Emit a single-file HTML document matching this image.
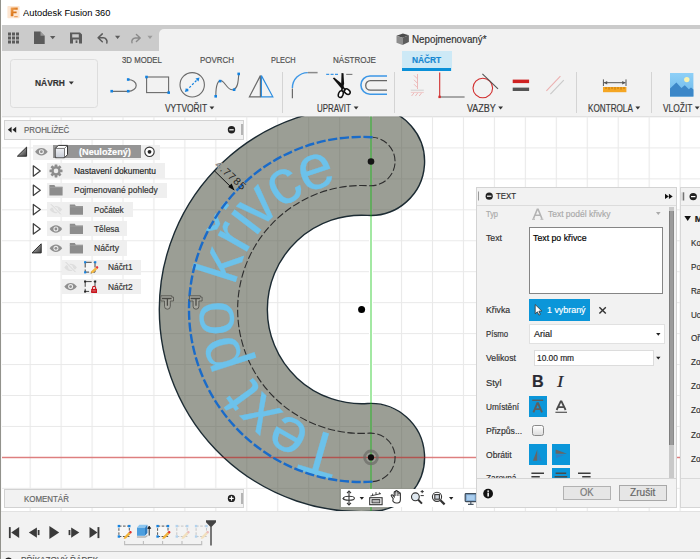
<!DOCTYPE html>
<html lang="cs">
<head>
<meta charset="utf-8">
<title>Autodesk Fusion 360</title>
<style>
*{box-sizing:border-box;margin:0;padding:0}
html,body{width:700px;height:559px;overflow:hidden;background:#fff}
body{position:relative;font-family:"Liberation Sans",sans-serif;font-size:9px;color:#444}
.abs{position:absolute}
svg{position:absolute;overflow:visible}
.t{position:absolute;white-space:nowrap;line-height:12px;height:12px;transform-origin:0 50%;-webkit-text-stroke:.18px currentColor}
#titlebar{left:0;top:0;width:700px;height:25px;background:#fff}
#qat{left:0;top:25px;width:700px;height:26px;background:#cbcbcb}
#qatlight{left:158.500px;top:28.500px;width:542px;height:22.500px;background:#f2f2f2;border-top-left-radius:5px}
#ribbon{left:0;top:51px;width:700px;height:65px;background:#f2f2f2}
#ribline{left:0;top:116px;width:700px;height:1px;background:#dedede}
#canvas{left:0;top:117px;width:700px;height:395px;background:#fff}
#timeline{left:0;top:511.400px;width:700px;height:40px;background:#f2f2f2;border-top:1px solid #e2e2e2}
#cmdbar{left:0;top:550.500px;width:700px;height:9px;background:#f2f2f2;border-top:1px solid #c6c6c6}
#leftedge{left:0;top:0;width:1px;height:559px;background:#92928c}
.sep{position:absolute;top:72px;width:1px;height:41px;background:#d4d4d4}
.rowbg{position:absolute;height:15px;background:#efefef}
.panelhdr{position:absolute;background:#f2f2f2;border:1px solid #d2d2d2}
</style>
</head>
<body>
<div id="titlebar" class="abs"></div>
<div id="qat" class="abs"></div>
<div id="qatlight" class="abs"></div>
<div id="ribbon" class="abs"></div>
<div id="ribline" class="abs"></div>
<div id="canvas" class="abs"></div>

<svg style="left:0;top:116px" width="700" height="396" viewBox="0 116 700 396">
  <defs>
    <pattern id="grid" x="355.125" y="441.925" width="30.950" height="30.950" patternUnits="userSpaceOnUse">
      <path d="M15.475 0V30.950M0 15.475H30.950" stroke="#e9e9e9" stroke-width="1.100" fill="none"/>
    </pattern>
    <path id="tp" d="M370.41 448.17 A139 139 0 1 1 370.41 170.73"/>
    <clipPath id="cv"><rect x="0" y="116.500" width="700" height="395.500"/></clipPath>
  </defs>
  <g clip-path="url(#cv)">
  <rect x="0" y="116" width="700" height="396" fill="url(#grid)"/>
  <rect x="369" y="116" width="4" height="396" fill="#fff"/>
  <!-- body -->
  <path d="M374.42 107.61 A202.25 202.25 0 1 0 374.42 511.29 A54 54 0 0 0 367.58 403.51 A94.25 94.25 0 1 1 367.58 215.39 A54 54 0 0 0 374.42 107.61 Z" fill="#464b3b" fill-opacity=".54" stroke="#1c2b33" stroke-width="1.4"/>
  <!-- axis lines -->
  <line x1="371" y1="116" x2="371" y2="512" stroke="#00be00" stroke-opacity=".36" stroke-width="2"/>
  <line x1="0" y1="457.4" x2="700" y2="457.4" stroke="#d01414" stroke-opacity=".5" stroke-width="1.500"/>
  <!-- slot dashed -->
  <path d="M372.54 481.65 A24.3 24.3 0 0 0 369.46 433.15 A123.95 123.95 0 1 1 369.46 185.75 A24.3 24.3 0 0 0 372.54 137.25" fill="none" stroke="#2e2e2e" stroke-width="1.100" stroke-dasharray="7.500 2.500"/>
  <!-- text on curve -->
  <text font-family="Liberation Sans, sans-serif" font-size="63" fill="#6cc2eb" stroke="#6cc2eb" stroke-width=".25" dy="10.700" style="font-kerning:none"><textPath href="#tp" startOffset="28.700">T<tspan dx="-2.700">e</tspan>xt po k<tspan dx="3">ř</tspan><tspan dx="1.200">i</tspan><tspan dx="-4.200">v</tspan>ce</textPath></text>
  <path d="M372.54 137.25 A172.55 172.55 0 1 0 372.54 481.65" fill="none" stroke="#1a6bc9" stroke-width="2.400" stroke-dasharray="9.200 2.600"/>
  <!-- dimension -->
  <line x1="214.300" y1="170.700" x2="234" y2="190" stroke="#111" stroke-width="1"/>
  <path d="M234.600 190.600l-6.400-3.700l3.400-3.300z" fill="#0a0a0a"/>
  <text font-family="Liberation Sans, sans-serif" font-size="10.600" letter-spacing=".9" fill="#262626" transform="translate(214.400,165.700) rotate(42)"><tspan fill="#e4e4e0" stroke="#777" stroke-width=".5">4</tspan>.7785</text>
  <!-- constraint glyphs -->
  <g id="cg" fill="none" stroke-linejoin="round">
    <path d="M160.800 295.800h11v1.300h1.700v3.900h-3.200v5.300a2.900 2.900 0 0 1-5.800 0v-5.300h-3.700z" fill="#a6a79f" stroke="#55554f" stroke-width=".9"/>
    <path d="M162 298.500h9.600M167.400 298.800v7" stroke="#4a4a45" stroke-width="1.300"/>
  </g>
  <use href="#cg" x="28.600" y="0"/>
  <!-- points -->
  <circle cx="361.600" cy="309.450" r="3.500" fill="#000"/>
  <circle cx="371" cy="161.500" r="3.300" fill="#151515"/>
  <circle cx="371" cy="457.400" r="6.4" fill="none" stroke="#6e6e69" stroke-width="2.8" stroke-opacity=".75"/>
  <circle cx="371" cy="457.400" r="3.1" fill="#0c0c0c"/>
  </g>
</svg>


<!-- NÁVRH button -->
<div class="abs" style="left:9.500px;top:59.300px;width:88.500px;height:49px;border:1.400px solid #dddddd;border-radius:3.500px;background:#f2f2f2"></div>
<!-- active tab -->
<div class="abs" style="left:402.200px;top:51px;width:49.600px;height:19.600px;background:#cde9f6"></div>
<div class="abs" style="left:402.200px;top:67.900px;width:49.200px;height:2.700px;background:#0a90d8"></div>
<!-- ribbon separators -->
<div class="sep" style="left:282px"></div>
<div class="sep" style="left:394px"></div>
<div class="sep" style="left:576px"></div>
<div class="sep" style="left:651px"></div>

<svg style="left:0;top:0" width="700" height="120" viewBox="0 0 700 120">
  <defs>
    <linearGradient id="fg" x1="0" y1="0" x2="1" y2="1"><stop offset="0" stop-color="#f2a860"/><stop offset=".5" stop-color="#dd7a1e"/><stop offset="1" stop-color="#c4600f"/></linearGradient>
    <linearGradient id="sky" x1="0" y1="0" x2="0" y2="1"><stop offset="0" stop-color="#8fd0f7"/><stop offset="1" stop-color="#6cb8ea"/></linearGradient>
  </defs>
  <!-- app icon -->
  <rect x="7.400" y="6" width="12.200" height="12.200" rx=".8" fill="#fde6d2"/>
  <path d="M10.700 7.500h7v2.200h-4.300v1.700h3.200v1.900h-3.200v2.900h-2.700z" fill="url(#fg)"/>
  <path d="M14.200 16h3.500v1.200h-3.500z" fill="#eda25e"/>
  <!-- QAT icons -->
  <g fill="#5b5b5b">
    <path d="M8 32.5h3v3h-3zM12 32.5h3v3h-3zM16 32.5h3v3h-3zM8 36.5h3v3h-3zM12 36.5h3v3h-3zM16 36.5h3v3h-3zM8 40.5h3v3h-3zM12 40.5h3v3h-3zM16 40.5h3v3h-3z"/>
    <path d="M34 31.6h6.5l4.2 4.2v8.2h-10.7z"/>
    <path d="M50 36h5.4l-2.7 3.2z"/>
    <path d="M70 32.5h10l2 2v9.1h-12zM72.2 34.2v3.4h6.6v-3.4zM73 39.6v4h6v-4z" fill-rule="evenodd"/>
    <path d="M75.6 40.4h1.8v2.6h-1.8z"/>
    <path d="M115 35.8h5.2l-2.6 3.2z"/>
  </g>
  <path d="M40.5 31.6v4.2h4.2z" fill="#cbcbcb" opacity=".55"/>
  <path d="M102.300 33.900l-4.200 3.900l4.200 3.900M98.600 37.800h4.600a3.900 3.900 0 0 1 3.600 5.200" fill="none" stroke="#5b5b5b" stroke-width="1.5" stroke-linecap="round" stroke-linejoin="round"/>
  <path d="M136.4 34.4l3.8 3.6l-3.8 3.6M139.8 38h-4.4a3.6 3.6 0 0 0-3.4 4.8" fill="none" stroke="#8a8a8a" stroke-width="1.400" stroke-linecap="round" stroke-linejoin="round"/>
  <path d="M147.4 35.8h5.2l-2.6 3.2z" fill="#9c9c9c"/>
  <!-- document cube -->
  <path d="M396.500 35.700l6.400-2.200l6 1.700l-6.400 2.500z" fill="#4c4c4c"/>
  <path d="M396.500 35.700l6 2v7.400l-6-2.400z" fill="#8e8e8e"/>
  <path d="M402.500 37.700l6.400-2.500v6.900l-6.400 3z" fill="#5c5c5c"/>
  <!-- NÁVRH arrow -->
  <path d="M68.8 81.6h5l-2.5 3z" fill="#333"/>

  <!-- ===== VYTVOŘIT icons ===== -->
  <!-- line+arc -->
  <path d="M111.800 91.300h16.400M128.200 79.500a8 5.900 0 0 1 0 11.800" fill="none" stroke="#6e6e6e" stroke-width="1.200"/>
  <g fill="#1382e0"><rect x="110.4" y="89.9" width="2.6" height="2.6"/><rect x="126.9" y="89.9" width="2.6" height="2.6"/><rect x="126.9" y="78.2" width="2.6" height="2.6"/></g>
  <!-- rectangle -->
  <rect x="146.6" y="77" width="22" height="15.6" fill="none" stroke="#6a6a6a" stroke-width="1.1"/>
  <g fill="#1382e0"><rect x="145.2" y="75.7" width="2.6" height="2.6"/><rect x="167.4" y="91.3" width="2.6" height="2.6"/></g>
  <!-- circle -->
  <circle cx="192.2" cy="84.8" r="12.2" fill="none" stroke="#6a6a6a" stroke-width="1.1"/>
  <path d="M186.600 90.400l11.200-11.200" stroke="#1382e0" stroke-width="1.300" stroke-dasharray="2.200 1.700" fill="none"/>
  <path d="M184.9 92.1l1-4l3 3zM199.5 77.5l-1 4l-3-3z" fill="#1382e0"/>
  <!-- spline -->
  <path d="M215.8 96.4c0-12 2.4-17.2 6.2-15.4c3.8 1.8 6 10.6 11.6 8.6c4.4-1.6 4.6-8.600 5.200-15.6" fill="none" stroke="#6a6a6a" stroke-width="1.1"/>
  <g fill="#1382e0"><rect x="214.400" y="95" width="2.6" height="2.6"/><rect x="218.800" y="79.8" width="2.600" height="2.6"/><rect x="232.8" y="88.4" width="2.6" height="2.6"/><rect x="237.4" y="72.6" width="2.6" height="2.600"/></g>
  <!-- mirror -->
  <path d="M260.4 75.600l-11 21.200h11z" fill="none" stroke="#6a6a6a" stroke-width="1.200"/>
  <path d="M261.400 75.600l11.4 21.200h-11.4z" fill="none" stroke="#2c8de0" stroke-width="1.2"/>

  <!-- ===== UPRAVIT icons ===== -->
  <!-- fillet -->
  <path d="M292.4 88a15.400 15.400 0 0 1 15.400-15.400" fill="none" stroke="#3d97e6" stroke-width="1.400"/>
  <path d="M307.800 72.600h9.800" fill="none" stroke="#8a8a8a" stroke-width="1.500"/>
  <path d="M292.400 88.400v9.800" fill="none" stroke="#6a6a6a" stroke-width="1.200"/>
  <!-- trim -->
  <path d="M326.200 74.400h13.200" stroke="#3d97e6" stroke-width="1.200" stroke-dasharray="3 1.400" fill="none"/>
  <path d="M346.200 74.400h6.200" stroke="#7a7a7a" stroke-width="1.100" fill="none"/>
  <path d="M341.500 72.900l2 .300l.600 10.500l-1.200 5.300l-1.800-2.800z" fill="#111"/>
  <path d="M332.800 78.300l1.400-.800l8 6.600l2.400 4.200l-2.400 1.200z" fill="#111"/>
  <ellipse cx="340.800" cy="94.100" rx="2.300" ry="3.500" transform="rotate(20 340.8 94.1)" fill="#fff" stroke="#111" stroke-width="1.500"/>
  <ellipse cx="347.200" cy="91.600" rx="2.300" ry="3.300" transform="rotate(-50 347.2 91.6)" fill="#fff" stroke="#111" stroke-width="1.500"/>
  <path d="M342.600 87.400l-1.200 3.600M344 88.400l1.800 1.800" stroke="#111" stroke-width="1.500" fill="none"/>
  <!-- offset -->
  <path d="M387 76h-17a9.100 9.100 0 0 0 0 18.200h17" fill="none" stroke="#3d97e6" stroke-width="1.600"/>
  <path d="M387 80.700h-16.600a4.700 4.700 0 0 0 0 9.400h16.600" fill="none" stroke="#666" stroke-width="1.300"/>

  <!-- ===== VAZBY icons ===== -->
  <g stroke="#ecb9b9" stroke-width="1" fill="none">
    <path d="M417.500 74v15"/><path d="M410.800 90.200h13" stroke="#cfcfcf"/>
    <path d="M414 75.400l3.400 3.400M414 79.800l3.400 3.400M414 84.200l3.400 3.400"/>
    <path d="M411.600 96l2.600-3.400M415.400 96l2.600-3.400M419.200 96l2.600-3.400" />
  </g>
  <path d="M410.800 92.400h13" stroke="#f0caca" stroke-width="1" fill="none"/>
  <path d="M439.700 72.600v23.800" stroke="#d12d2d" stroke-width="1.100" fill="none"/>
  <path d="M440 97h24.600" stroke="#6a6a6a" stroke-width="1.100" fill="none"/>
  <rect x="438.400" y="95.700" width="2.400" height="2.400" fill="#d12d2d"/>
  <circle cx="482.800" cy="88" r="9.800" fill="none" stroke="#d12d2d" stroke-width="1.100"/>
  <path d="M482.400 73.800l15.600 15" stroke="#555" stroke-width="1.100" fill="none"/>
  <rect x="512.700" y="79.600" width="16.400" height="3.500" fill="#cf2222"/>
  <rect x="512.700" y="87.600" width="16.400" height="3.400" fill="#555"/>
  <path d="M546.400 90.800l14-14.600" stroke="#ebb0b0" stroke-width="1.100" fill="none"/>
  <path d="M550.400 94.200l13.400-14" stroke="#c9c9c9" stroke-width="1.100" fill="none"/>

  <!-- ===== KONTROLA icon ===== -->
  <path d="M603.400 79.400v6.600M626 79.400v6.600M604 82.700h21.400" stroke="#555" stroke-width="1" fill="none"/>
  <path d="M603.800 82.700l3.400-1.800v3.600zM625.600 82.700l-3.400-1.800v3.600z" fill="#555"/>
  <rect x="603" y="87" width="23.400" height="5.200" fill="#f5a623"/>
  <path d="M606 87v2M609 87v2.600M612 87v2M615 87v2.600M618 87v2M621 87v2.600M624 87v2" stroke="#b86e00" stroke-width=".8" fill="none"/>
  <!-- ===== VLOŽIT icon ===== -->
  <rect x="670" y="73" width="23.400" height="23.600" fill="url(#sky)"/>
  <circle cx="686.800" cy="79.600" r="2.700" fill="#f8f2b0"/>
  <path d="M670 96.600v-8.200l6.400-5.800l5 5.400l3.400-2.800l4 4l2.200-1.600l2.400 2v7z" fill="#3c87c8"/>
  <!-- ribbon arrows -->
  <g fill="#333">
    <path d="M209.500 106.400h4.800l-2.400 3z"/><path d="M353.700 106.400h4.800l-2.400 3z"/><path d="M498.200 106.400h4.800l-2.400 3z"/><path d="M635.400 106.400h4.800l-2.400 3z"/><path d="M694.800 106.400h4.800l-2.400 3z"/>
  </g>
</svg>
<!-- left strip -->
<div class="abs" style="left:1px;top:25px;width:1px;height:534px;background:#fafafa"></div>
<!-- browser header -->
<div class="panelhdr" style="left:4px;top:120px;width:240px;height:20px"></div>
<div class="abs" style="left:241px;top:124px;width:1.500px;height:11px;background:#b4b4b4"></div>
<!-- comment header -->
<div class="panelhdr" style="left:4px;top:489px;width:240px;height:19px"></div>
<div class="abs" style="left:241px;top:493px;width:1.500px;height:11px;background:#b4b4b4"></div>
<!-- tree row backgrounds -->
<div class="rowbg" style="left:33px;top:144.600px;width:127px"></div>
<div class="abs" style="left:53px;top:145px;width:88.400px;height:12.800px;background:#959595"></div>
<div class="rowbg" style="left:47px;top:163.200px;width:117.500px"></div>
<div class="rowbg" style="left:47px;top:182.500px;width:120px"></div>
<div class="rowbg" style="left:47px;top:201.900px;width:86px"></div>
<div class="rowbg" style="left:47px;top:221.200px;width:80px"></div>
<div class="rowbg" style="left:47px;top:240.500px;width:80px"></div>
<div class="rowbg" style="left:62px;top:259.800px;width:79px"></div>
<div class="rowbg" style="left:62px;top:279.100px;width:79px"></div>

<svg style="left:0;top:116px" width="250" height="395" viewBox="0 116 250 395">
  <defs>
    <linearGradient id="tri" x1="0" y1="0" x2="1" y2="1"><stop offset="0" stop-color="#d8d8d8"/><stop offset="1" stop-color="#3a3a3a"/></linearGradient>
    <linearGradient id="cube" x1="0" y1="0" x2="0" y2="1"><stop offset="0" stop-color="#eef0f4"/><stop offset="1" stop-color="#c9ced8"/></linearGradient>
    <g id="eye"><path d="M0 3.700c2-2.600 4-3.700 6.300-3.700s4.300 1.100 6.300 3.700c-2 2.600-4 3.700-6.300 3.700s-4.300-1.100-6.300-3.700z" fill="#8f8f8f"/><circle cx="6.300" cy="3.700" r="2.500" fill="#ececec"/><circle cx="6.300" cy="3.700" r="1.400" fill="#8f8f8f"/></g>
    <g id="eyeoff"><path d="M0 3.700c2-2.600 4-3.700 6.300-3.700s4.300 1.100 6.300 3.700c-2 2.600-4 3.700-6.300 3.700s-4.300-1.100-6.300-3.700z" fill="#dedede"/><circle cx="6.300" cy="3.700" r="2.300" fill="#efefef"/><circle cx="6.300" cy="3.700" r="1.200" fill="#dedede"/><path d="M1.400-1.600l9.800 10" stroke="#efefef" stroke-width="2.400"/><path d="M1.400-1.600l9.800 10" stroke="#d6d6d6" stroke-width="1"/></g>
    <g id="folder"><path d="M0 0h5l1 1.600h7.200v8.700h-13.200z" fill="#8d8d8d"/><path d="M0 2.300h13.200" stroke="#a8a8a8" stroke-width=".6"/></g>
    <g id="exp"><path d="M9.200 0v9.100h-9.200z" fill="url(#tri)" stroke="#2e2e2e" stroke-width="1" stroke-linejoin="round"/></g>
    <g id="col"><path d="M0 0l7 5.200l-7 5.200z" fill="#fff" stroke="#3c3c3c" stroke-width="1.200" stroke-linejoin="round"/></g>
    <g id="sk"><rect x="1.100" y="1.100" width="9.800" height="9.800" fill="#f6f6f6" stroke="#444" stroke-width="1" stroke-dasharray="6.500 2"/></g>
  </defs>
  <!-- header icons -->
  <path d="M11.600 126.800v6l-3.800-3zM16.200 126.800v6l-3.800-3z" fill="#222"/>
  <circle cx="231.500" cy="129.800" r="3.700" fill="#222"/><rect x="229.300" y="129.200" width="4.400" height="1.200" fill="#fff"/>
  <circle cx="231.500" cy="498.400" r="3.700" fill="#222"/><rect x="229.300" y="497.800" width="4.400" height="1.200" fill="#fff"/><rect x="230.900" y="496.200" width="1.200" height="4.400" fill="#fff"/>
  <!-- row 1 -->
  <use href="#exp" x="17.400" y="147.100"/>
  <use href="#eye" x="35.100" y="148"/>
  <path d="M55.300 148.400l3-3h9.200v9.300l-3 3h-9.200z" fill="#fff" stroke="#333" stroke-width="1" stroke-linejoin="round"/>
  <rect x="55.800" y="148.600" width="8.400" height="8.600" rx="1" fill="url(#cube)"/>
  <path d="M55.300 148.400h9.200v9.300M64.500 148.400l3-3" fill="none" stroke="#555" stroke-width=".8"/>
  <circle cx="149.500" cy="151.800" r="4.700" fill="#fff" stroke="#333" stroke-width="1.100"/><circle cx="149.500" cy="151.800" r="1.900" fill="#222"/>
  <!-- row 2 -->
  <use href="#col" x="33.300" y="165.800"/>
  <g transform="translate(56,170.900)" fill="#8d8d8d">
    <circle r="4.600"/>
    <g><rect x="-1.400" y="-6.500" width="2.800" height="13" rx=".4"/><rect x="-1.400" y="-6.500" width="2.800" height="13" rx=".4" transform="rotate(45)"/><rect x="-1.400" y="-6.500" width="2.800" height="13" rx=".4" transform="rotate(90)"/><rect x="-1.400" y="-6.500" width="2.800" height="13" rx=".4" transform="rotate(135)"/></g>
    <circle r="2.300" fill="#ececec"/>
  </g>
  <!-- row 3 -->
  <use href="#col" x="33.300" y="185.100"/>
  <use href="#folder" x="49.400" y="185.100"/>
  <!-- row 4 -->
  <use href="#col" x="33.300" y="204.400"/>
  <use href="#eyeoff" x="49.600" y="205.900"/>
  <use href="#folder" x="69.800" y="204.500"/>
  <!-- row 5 -->
  <use href="#col" x="33.300" y="223.700"/>
  <use href="#eye" x="49.600" y="225.300"/>
  <use href="#folder" x="69.800" y="223.800"/>
  <!-- row 6 -->
  <use href="#exp" x="32" y="243.800"/>
  <use href="#eye" x="49.600" y="244.600"/>
  <use href="#folder" x="69.800" y="243.100"/>
  <!-- row 7 -->
  <use href="#eyeoff" x="64.300" y="263.700"/>
  <use href="#sk" x="84.100" y="261.200"/>
  <g fill="#1382e0"><rect x="84.100" y="261.200" width="2.100" height="2.100"/><rect x="94.200" y="261.200" width="2.100" height="2.100"/><rect x="84.100" y="271.300" width="2.100" height="2.100"/></g>
  <path d="M90.600 273.600l.7-2.300l4.300-4.100l1.700 1.700l-4.300 4.100z" fill="#f4b942"/><path d="M95.600 267.200l.8-.8c.4-.4 1-.4 1.300 0l.4.400c.4.400.4 1 0 1.300l-.8.800z" fill="#e8343a"/><path d="M90.600 273.600l.4-1.300l1 1z" fill="#555"/>
  <!-- row 8 -->
  <use href="#eye" x="64.300" y="282.900"/>
  <use href="#sk" x="84.100" y="280.500"/>
  <g fill="#222"><rect x="84.100" y="280.500" width="2" height="2"/><rect x="94.200" y="280.500" width="2" height="2"/><rect x="84.100" y="290.600" width="2" height="2"/></g>
  <rect x="91.200" y="288.900" width="5.800" height="4.100" fill="#c8141c"/><path d="M92.500 288.900v-.9a1.600 1.600 0 0 1 3.200 0v.9" fill="none" stroke="#c8141c" stroke-width="1.100"/><rect x="92.400" y="290.400" width="3.400" height="1" fill="#e07a7e"/>
</svg>
<!-- nav toolbar -->
<div class="abs" style="left:340.500px;top:488.700px;width:140px;height:18.300px;background:#fff"></div>
<svg style="left:340px;top:486px" width="140" height="24" viewBox="340 486 140 24">
  <g fill="none" stroke="#333" stroke-width="1.100">
    <!-- orbit -->
    <ellipse cx="349" cy="498.200" rx="5.400" ry="2"/><path d="M349 491.400v13.200"/><path d="M347 493.200l2-2.200l2 2.200M347 502.800l2 2.200l2-2.200" />
    <path d="M343.600 497.400l-.8 1.600l1.800.6" stroke-width="1"/>
    <!-- look at -->
    <rect x="369.700" y="497.700" width="12.400" height="7" />
    <rect x="372" y="499.600" width="7.800" height="3.300" fill="#b9b9b9" stroke-width=".9"/>
    <path d="M370.400 496l10.600-2.400M372.600 495.500v-2M376 494.700v-2.600M379.400 494v-1.600" stroke-width=".9"/>
    <!-- hand -->
    <path d="M393.200 498.600l-1.800-2.600c-.6-.8.600-1.800 1.400-.8l1.400 1.600v-4.400c0-1.100 1.500-1.100 1.500 0v-1.100c0-1.100 1.600-1.100 1.600 0v1c0-1.100 1.600-1.100 1.600 0v1.400c0-1.100 1.500-1.100 1.500 0v5.500c0 2.200-1.200 3.800-3 3.800h-1.400c-1.600 0-2.400-.8-3.200-2z" fill="#fff" stroke-width="1.100"/>
    <path d="M395.700 492.400v3.600M397.300 492v4M398.900 492.700v3.300" stroke-width=".7"/>
    <!-- zoom +- -->
    <circle cx="415.400" cy="496.800" r="3.900" fill="#dfe8f0"/><path d="M418.200 499.800l3.800 3.800" stroke-width="2"/>
    <path d="M420.600 491.600h3.200M422.200 490v3.200M420.600 495.600h3.200" stroke-width="1"/>
    <!-- zoom window -->
    <circle cx="437" cy="496.800" r="4.600" fill="#fff"/><rect x="434.800" y="494.600" width="4.600" height="4.600" fill="#cfd6de"/><path d="M440.400 500.200l4.200 4.200" stroke-width="2.200"/>
  </g>
  <path d="M359.600 497h4.400l-2.200 2.800zM449 497h4.400l-2.200 2.800z" fill="#222"/>
  <!-- display -->
  <rect x="465.200" y="493.600" width="11.200" height="8" rx=".8" fill="#86aed4" stroke="#3f4c5a" stroke-width="1.200"/>
  <rect x="467" y="495.200" width="7.600" height="4.800" fill="#a9cdee"/>
  <path d="M468 504.300h5.600M470.800 501.800v2.500" stroke="#4a5866" stroke-width="1.200" fill="none"/>
</svg>

<!-- second panel (sketch palette) -->
<div class="abs" style="left:679.800px;top:186.600px;width:30px;height:321px;background:#f2f2f2;border:1px solid #d6d6d6"></div>
<div class="abs" style="left:681px;top:205px;width:20px;height:1px;background:#dedede"></div>
<div class="abs" style="left:681px;top:478.300px;width:20px;height:1px;background:#d9d9d9"></div>
<!-- TEXT dialog -->
<div class="abs" style="left:476px;top:186.600px;width:200.600px;height:321px;background:#f2f2f2;border:1px solid #d3d3d3"></div>
<div class="abs" style="left:477px;top:205px;width:198.600px;height:1px;background:#dcdcdc"></div>
<div class="abs" style="left:477px;top:478.300px;width:198.600px;height:1px;background:#d4d4d4"></div>
<!-- scrollbar -->
<div class="abs" style="left:669.400px;top:206.800px;width:4.800px;height:271.500px;background:#c9c9c9"></div>
<div class="abs" style="left:669.400px;top:210.600px;width:4.800px;height:234.200px;background:#9b9b9b;border-left:1px solid #7e7e7e;border-right:1px solid #8a8a8a"></div>
<!-- controls -->
<div class="abs" style="left:528.500px;top:227.300px;width:134.300px;height:66.300px;background:#fff;border:1px solid #858585"></div>
<div class="abs" style="left:528.500px;top:299.300px;width:61.800px;height:21.300px;background:#0b96d9"></div>
<div class="abs" style="left:528.500px;top:324.100px;width:136.100px;height:20.400px;background:#fff;border:1px solid #e1e1e1"></div>
<div class="abs" style="left:533.700px;top:349.700px;width:120.100px;height:16.200px;background:#fff;border:1px solid #dcdcdc"></div>
<div class="abs" style="left:528.500px;top:395.800px;width:18.300px;height:21.300px;background:#0b96d9"></div>
<div class="abs" style="left:532.300px;top:425.200px;width:11.300px;height:10.800px;border:1px solid #8a8a8a;border-radius:2.500px;background:linear-gradient(#fdfdfd,#dedede)"></div>
<div class="abs" style="left:528.500px;top:443.900px;width:18.300px;height:21.300px;background:#0b96d9"></div>
<div class="abs" style="left:551.800px;top:443.900px;width:18.300px;height:21.300px;background:#0b96d9"></div>
<div class="abs" style="left:551.800px;top:468px;width:18.300px;height:10.300px;background:#0b96d9"></div>
<div class="abs" style="left:562.900px;top:485.500px;width:48px;height:14.400px;background:#e6e6e6;border:1px solid #b2b2b2"></div>
<div class="abs" style="left:618.800px;top:485.100px;width:48.100px;height:15.800px;background:#e6e6e6;border:1px solid #a8a8a8"></div>

<svg style="left:470px;top:186px" width="230" height="325" viewBox="470 186 230 325">
  <!-- header icons -->
  <rect x="478" y="191.500" width="1" height="9" fill="#9a9a9a"/>
  <circle cx="489.200" cy="196.200" r="3.600" fill="#222"/><rect x="487" y="195.600" width="4.400" height="1.200" fill="#fff"/>
  <path d="M665 193.800v5.200l3.800-2.600zM668.900 193.800v5.200l3.800-2.600z" fill="#111"/>
  <rect x="681.600" y="192.300" width="1.400" height="8.200" fill="#c8c8c8"/><rect x="683.200" y="192.300" width="1" height="8.200" fill="#555"/>
  <circle cx="693.200" cy="196.600" r="3.700" fill="#222"/><rect x="691" y="196" width="4.400" height="1.200" fill="#fff"/>
  <path d="M684.400 216h6.600l-3.300 5z" fill="#111"/>
  <!-- Typ row -->
  <path d="M533.400 218.800l3.900-9.600h.8l3.900 9.600M535 215.300h5.400" fill="none" stroke="#b3b3b3" stroke-width="1.600"/>
  <path d="M532 219.200h3M540.400 219.200h3" stroke="#b3b3b3" stroke-width="1.100"/>
  <path d="M656 212h4.600l-2.300 2.900z" fill="#aaa"/>
  <!-- cursor in Křivka button -->
  <path d="M535.200 304.600v9.200l2.200-2l1.500 3.300l1.500-.7l-1.500-3.200l2.900-.2z" fill="#fff" stroke="#333" stroke-width=".8" stroke-linejoin="round"/>
  <path d="M599.400 307.200l6.400 6.400M605.800 307.200l-6.400 6.400" stroke="#333" stroke-width="1.400"/>
  <path d="M656.100 332.900h4.400l-2.200 2.800zM656.100 356.800h4.400l-2.200 2.800z" fill="#222"/>
  <!-- Umístění icons -->
  <path d="M532.200 400.300h11" stroke="#5e5e5e" stroke-width="1.400"/>
  <path d="M533.400 412.300l3.900-9h.8l3.900 9M535 409.100h5.400" fill="none" stroke="#5e5e5e" stroke-width="1.900"/>
  <path d="M556.600 410l4.100-8.600h.8l4.100 8.600M558.200 407.100h5.800" fill="none" stroke="#4a4a4a" stroke-width="1.800"/>
  <path d="M555.400 412.300h11.600" stroke="#555" stroke-width="1.200"/>
  <!-- Obrátit icons -->
  <path d="M537.300 449.600v11.200h-4.400z" fill="#666"/><path d="M538.300 451.600v9.200h3.400z" fill="#2f7fc4"/>
  <path d="M555.600 453.800h11.400l-11.400-4.400z" fill="#666"/><path d="M556 454.800h9l-9 3.400z" fill="#2f7fc4"/>
  <!-- Zarovnání icons -->
  <path d="M531.400 473.300h12.600M531.400 476.800h8.400" stroke="#3c3c3c" stroke-width="1.500"/>
  <path d="M555.600 473.300h10.600M554.600 476.800h12.600" stroke="#4a4a4a" stroke-width="1.500"/>
  <path d="M578 473.300h12.600M582.200 476.800h8.400" stroke="#3c3c3c" stroke-width="1.500"/>
  <!-- info -->
  <circle cx="488.100" cy="493.600" r="4.900" fill="#111"/><rect x="487.400" y="492.600" width="1.500" height="3.900" fill="#fff"/><rect x="487.400" y="490.400" width="1.500" height="1.500" fill="#fff"/>
</svg>


<div id="timeline" class="abs"></div>
<div id="cmdbar" class="abs"></div>

<svg style="left:0;top:511px" width="230" height="48" viewBox="0 511 230 48">
  <defs>
    <g id="tsk"><rect x="1.200" y="1.200" width="10.400" height="10.400" fill="#f7f7f7" stroke="#555" stroke-width="1" stroke-dasharray="2.600 1.500"/><g fill="#1382e0"><rect x="0" y="0" width="2.400" height="2.400"/><rect x="10.400" y="0" width="2.400" height="2.400"/><rect x="0" y="10.400" width="2.400" height="2.400"/></g><path d="M6.600 11.800l4.600-4.600l1.700 1.700l-4.600 4.600l-2.400.7z" fill="#f2b43c"/><path d="M11.200 7.200l1.700 1.700l.9-.9c.4-.4.400-1 0-1.400l-.3-.3c-.4-.4-1-.4-1.400 0z" fill="#e0302a"/></g>
  </defs>
  <g fill="#3a3a3a">
    <rect x="8.900" y="527.100" width="1.800" height="11"/><path d="M19.200 527.100v11l-8-5.500z"/>
    <path d="M36.900 527.400v10.300l-8.100-5.150z"/><rect x="37.700" y="530" width="1.800" height="5.100"/>
    <path d="M49.400 526v12.900l9.800-6.450z"/>
    <rect x="68.600" y="530" width="1.800" height="5.100"/><path d="M71.200 527.400v10.300l8.100-5.150z"/>
    <path d="M89.500 527.100v11l8-5.500z"/><rect x="97.500" y="527.100" width="1.900" height="11"/>
  </g>
  <use href="#tsk" x="117.700" y="524.900"/>
  <use href="#tsk" x="156.400" y="524.900"/>
  <use href="#tsk" x="175.600" y="524.900" opacity=".28"/>
  <use href="#tsk" x="194.900" y="524.900" opacity=".28"/>
  <!-- extrude -->
  <path d="M137 527.600l2.400-2.800h8l-2.400 2.800z" fill="#8cc6f0"/>
  <path d="M137 527.600h8v8.200h-8z" fill="#4c9ede"/>
  <path d="M145 527.600l2.400-2.800v8.200l-2.400 2.800z" fill="#2f7cc0"/>
  <path d="M136.900 536.200h8.400l2.200-1.400v1.600l-2.200 1.400h-8.400z" fill="#b5b5b5"/>
  <path d="M149.200 535.600v-8.400M147.800 528.400l1.400-2.200l1.400 2.200z" stroke="#222" stroke-width="1" fill="#222"/>
  <!-- bracket -->
  <path d="M124.600 541.100v3.500h77.100v-3.500M143.400 541.100v3.500M162.600 541.100v3.500M182 541.100v3.500" fill="none" stroke="#bdbdbd" stroke-width="1.100"/>
  <!-- marker -->
  <path d="M206 520.200h10v2l-4.300 4.600v18.600h-1.400v-18.600l-4.300-4.600z" fill="#444"/>
  <!-- cmd bar -->
  <circle cx="8.500" cy="561" r="3.600" fill="#222"/>
</svg>


<span class="t" style="left:23.2px;top:6.8px;font-size:9.6px;color:#000;-webkit-text-stroke:0;transform:scaleX(0.970)">Autodesk Fusion 360</span>
<span class="t" style="left:412.3px;top:33.6px;font-size:10.2px;color:#333;transform:scaleX(0.960)">Nepojmenovaný*</span>
<span class="t" style="left:121.7px;top:53.8px;font-size:8.8px;color:#505050;transform:scaleX(0.887)">3D MODEL</span>
<span class="t" style="left:199.6px;top:53.8px;font-size:8.8px;color:#505050;transform:scaleX(0.900)">POVRCH</span>
<span class="t" style="left:271.4px;top:53.8px;font-size:8.8px;color:#505050;transform:scaleX(0.841)">PLECH</span>
<span class="t" style="left:333.0px;top:53.8px;font-size:8.8px;color:#505050;transform:scaleX(0.913)">NÁSTROJE</span>
<span class="t" style="left:411.7px;top:53.8px;font-size:8.8px;color:#1587d2;font-weight:bold;transform:scaleX(0.945)">NÁČRT</span>
<span class="t" style="left:35.2px;top:77.2px;font-size:8.8px;color:#333;font-weight:bold;transform:scaleX(0.955)">NÁVRH</span>
<span class="t" style="left:165.1px;top:102.8px;font-size:10.0px;color:#3a3a3a;transform:scaleX(0.842)">VYTVOŘIT</span>
<span class="t" style="left:316.7px;top:102.8px;font-size:10.0px;color:#3a3a3a;transform:scaleX(0.795)">UPRAVIT</span>
<span class="t" style="left:466.5px;top:102.8px;font-size:10.0px;color:#3a3a3a;transform:scaleX(0.900)">VAZBY</span>
<span class="t" style="left:587.6px;top:102.8px;font-size:10.0px;color:#3a3a3a;transform:scaleX(0.815)">KONTROLA</span>
<span class="t" style="left:663.0px;top:102.8px;font-size:10.0px;color:#3a3a3a;transform:scaleX(0.840)">VLOŽIT</span>
<span class="t" style="left:24.0px;top:123.7px;font-size:8.8px;color:#666;transform:scaleX(0.900)">PROHLÍŽEČ</span>
<span class="t" style="left:79.4px;top:145.7px;font-size:9.0px;color:#fff;font-weight:bold;transform:scaleX(1.018)">(Neuložený)</span>
<span class="t" style="left:74.0px;top:165.0px;font-size:9.0px;color:#262626;transform:scaleX(0.935)">Nastavení dokumentu</span>
<span class="t" style="left:74.0px;top:184.2px;font-size:9.0px;color:#333;transform:scaleX(0.940)">Pojmenované pohledy</span>
<span class="t" style="left:94.0px;top:203.7px;font-size:9.0px;color:#333;transform:scaleX(0.912)">Počátek</span>
<span class="t" style="left:94.0px;top:223.0px;font-size:9.0px;color:#333;transform:scaleX(0.930)">Tělesa</span>
<span class="t" style="left:94.0px;top:242.4px;font-size:9.0px;color:#333;transform:scaleX(0.962)">Náčrty</span>
<span class="t" style="left:108.4px;top:261.4px;font-size:9.0px;color:#333;transform:scaleX(0.926)">Náčrt1</span>
<span class="t" style="left:108.4px;top:280.7px;font-size:9.0px;color:#333;transform:scaleX(0.926)">Náčrt2</span>
<span class="t" style="left:23.5px;top:492.5px;font-size:8.8px;color:#666;transform:scaleX(0.900)">KOMENTÁŘ</span>
<span class="t" style="left:496.0px;top:190.1px;font-size:9.0px;color:#333;transform:scaleX(0.870)">TEXT</span>
<span class="t" style="left:486.2px;top:207.6px;font-size:9.0px;color:#aaa;transform:scaleX(0.827)">Typ</span>
<span class="t" style="left:548.0px;top:207.6px;font-size:9.0px;color:#aaa;transform:scaleX(0.940)">Text podél křivky</span>
<span class="t" style="left:486.2px;top:231.7px;font-size:9.0px;color:#333;transform:scaleX(0.965)">Text</span>
<span class="t" style="left:533.0px;top:231.7px;font-size:9.0px;color:#000;transform:scaleX(0.973)">Text po křivce</span>
<span class="t" style="left:486.0px;top:304.4px;font-size:9.0px;color:#333;transform:scaleX(0.964)">Křivka</span>
<span class="t" style="left:546.8px;top:304.4px;font-size:9.0px;color:#fff;transform:scaleX(0.987)">1 vybraný</span>
<span class="t" style="left:486.0px;top:328.3px;font-size:9.0px;color:#333;transform:scaleX(0.869)">Písmo</span>
<span class="t" style="left:534.3px;top:328.3px;font-size:9.0px;color:#222;transform:scaleX(1.006)">Arial</span>
<span class="t" style="left:486.0px;top:352.2px;font-size:9.0px;color:#333;transform:scaleX(0.965)">Velikost</span>
<span class="t" style="left:536.6px;top:352.2px;font-size:9.0px;color:#222;transform:scaleX(0.925)">10.00 mm</span>
<span class="t" style="left:486.0px;top:376.7px;font-size:9.0px;color:#333;transform:scaleX(1.040)">Styl</span>
<span class="t" style="left:532.0px;top:375.8px;font-size:17.0px;color:#2a2a33;font-weight:bold;transform:scaleX(0.950)">B</span>
<span class="t" style="left:556.7px;top:375.8px;font-size:17.0px;color:#2a2a33;font-style:italic;font-family:'Liberation Serif',serif;transform:scaleX(1.117)">I</span>
<span class="t" style="left:486.0px;top:400.9px;font-size:9.0px;color:#333;transform:scaleX(0.919)">Umístění</span>
<span class="t" style="left:486.0px;top:424.8px;font-size:9.0px;color:#333;transform:scaleX(0.963)">Přizpůs...</span>
<span class="t" style="left:486.0px;top:449.0px;font-size:9.0px;color:#333;transform:scaleX(0.948)">Obrátit</span>
<span class="t" style="left:580.0px;top:487.4px;font-size:10.0px;color:#7a7a7a;transform:scaleX(0.943)">OK</span>
<span class="t" style="left:629.9px;top:487.4px;font-size:10.0px;color:#666;transform:scaleX(1.012)">Zrušit</span>
<!-- clipped: Zarovnání label -->
<div class="abs" style="left:480px;top:466px;width:60px;height:12.300px;overflow:hidden"><span class="t" style="left:6px;top:6.300px;font-size:9px;color:#333;transform:scaleX(.92)">Zarovná...</span></div>
<!-- second panel labels (cut at window edge) -->
<div class="abs" style="left:684px;top:205px;width:16px;height:300px;overflow:hidden">
<span class="t" style="left:10.700px;top:212.500px;margin-top:-205px;font-size:9.500px;color:#222;font-weight:bold">Možnosti</span>
<span class="t" style="left:6.600px;top:32px;color:#333;transform:scaleX(.9)">Konstrukce</span>
<span class="t" style="left:6.600px;top:56px;color:#333;transform:scaleX(.9)">Pohled na</span>
<span class="t" style="left:6.600px;top:80px;color:#333;transform:scaleX(.9)">Rastr náčrtu</span>
<span class="t" style="left:6.600px;top:104px;color:#333;transform:scaleX(.9)">Uchopit</span>
<span class="t" style="left:6.600px;top:127px;color:#333;transform:scaleX(.9)">Oříznutí</span>
<span class="t" style="left:6.600px;top:151px;color:#333;transform:scaleX(.9)">Zobrazit profil</span>
<span class="t" style="left:6.600px;top:175px;color:#333;transform:scaleX(.9)">Zobrazit body</span>
<span class="t" style="left:6.600px;top:199px;color:#333;transform:scaleX(.9)">Zobrazit kóty</span>
<span class="t" style="left:6.600px;top:224px;color:#333;transform:scaleX(.9)">Zobrazit vazby</span>
<span class="t" style="left:6.600px;top:248px;color:#333;transform:scaleX(.9)">Zobrazit promítnuté geometrie</span>
</div>
<!-- command bar label (cut at window bottom) -->
<span class="t" style="left:21px;top:553.900px;font-size:8.800px;color:#555;transform:scaleX(.93)">PŘÍKAZOVÝ ŘÁDEK</span>

<div id="leftedge" class="abs"></div>
</body>
</html>
